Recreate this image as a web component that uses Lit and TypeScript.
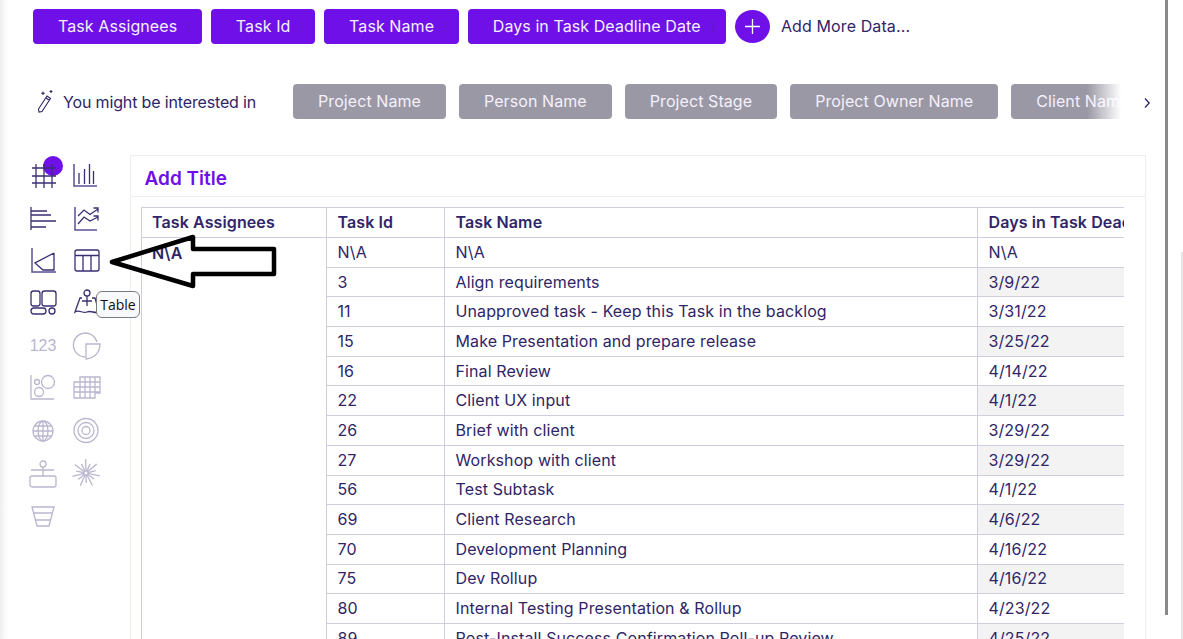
import { LitElement, html, css, svg } from "lit";
import { customElement } from "lit/decorators.js";

const S = (body: unknown, cls = "") => html`<svg class="ic ${cls}" viewBox="0 0 30 30" width="30" height="30">${body}</svg>`;

const burst = Array.from({ length: 14 }, (_, i) => {
  const a = (i / 14) * Math.PI * 2 + 0.2;
  const r = i % 2 ? 10 : 14;
  return svg`<line x1=${15 + 2 * Math.cos(a)} y1=${14 + 2 * Math.sin(a)} x2=${15 + r * Math.cos(a)} y2=${14 + r * Math.sin(a)} />`;
});

const icons = [
  { dim: false, el: S(svg`<circle class="dot" cx="25" cy="6" r="10"/><path d="M8 4V28M16 4V28M24 4V28M4 8H28M4 16H28M4 23H28"/>`) },
  { dim: false, el: S(svg`<path d="M3 4V26H26" class="ax"/><path d="M8 13V24M13.5 9V24M18.5 4V24M22.5 11V24"/>`) },
  { dim: false, el: S(svg`<path d="M3 4V27M3 8H19M3 12H23M3 18H28M3 24H18"/>`) },
  { dim: false, el: S(svg`<path d="M4 4V27H26" class="ax"/><path d="M7 13L13 7L19 11.5L27 6M22.5 5H27V9.5M7 21L13 14L19 18L27 14M22.5 13H27V17.5"/>`) },
  { dim: false, el: S(svg`<path d="M4 3V27H28" class="ax"/><path d="M26 8V25H15L7 18L26 8"/>`) },
  { dim: false, el: S(svg`<rect x="4" y="5" width="24" height="21" rx="2"/><path d="M4 10.5H28M12 10.5V26M20 10.5V26"/>`) },
  { dim: false, el: S(svg`<rect x="3" y="3" width="9" height="15" rx="2.5"/><rect x="14" y="3" width="14" height="15" rx="2.5"/><rect x="3" y="20" width="15" height="6" rx="3"/><circle cx="24" cy="23" r="3"/>`) },
  { dim: false, el: S(svg`<circle cx="16" cy="5" r="3"/><path d="M16 8V18M11 13H21M11 10H9L4 24C8 21 12 26 16 24C20 22 24 26 28 24L24 10H21"/>`) },
  { dim: true, el: html`<span class="num">123</span>` },
  { dim: true, el: S(svg`<path d="M14 26A12 12 0 1 1 26 11"/><path d="M15 13H29C29 21 24 27 15 28Z"/>`) },
  { dim: true, el: S(svg`<path d="M3 2V26H26"/><circle cx="20" cy="9" r="6.5"/><circle cx="11" cy="19" r="4.5"/><circle cx="9" cy="9" r="2.5"/>`) },
  { dim: true, el: S(svg`<path d="M9 4H29V20H24V25H3V9H9ZM9 4V25M14 4V25M19 4V25M24 4V20M3 14H29M9 9H29M3 19H29"/>`) },
  { dim: true, el: S(svg`<circle cx="15" cy="15" r="10"/><ellipse cx="15" cy="15" rx="5" ry="10"/><path d="M15 5V25M5 15H25M6.5 10H23.5M6.5 20H23.5"/>`) },
  { dim: true, el: S(svg`<circle cx="15" cy="14.5" r="12"/><circle cx="15" cy="14.5" r="8"/><circle cx="15" cy="14.5" r="4"/>`) },
  { dim: true, el: S(svg`<circle cx="15" cy="5" r="3"/><path d="M3 11H26M15 8V17"/><rect x="2" y="17" width="26" height="11" rx="2"/>`) },
  { dim: true, el: S(svg`${burst}<circle cx="15" cy="14" r="2.2"/>`) },
  { dim: true, el: S(svg`<path d="M4 5H26L21 24H9ZM6 11H24M7.5 18H22.5"/>`) },
];

const rows: [string, string, string][] = [
  ["N\\A", "N\\A", "N\\A"],
  ["3", "Align requirements", "3/9/22"],
  ["11", "Unapproved task - Keep this Task in the backlog", "3/31/22"],
  ["15", "Make Presentation and prepare release", "3/25/22"],
  ["16", "Final Review", "4/14/22"],
  ["22", "Client UX input", "4/1/22"],
  ["26", "Brief with client", "3/29/22"],
  ["27", "Workshop with client", "3/29/22"],
  ["56", "Test Subtask", "4/1/22"],
  ["69", "Client Research", "4/6/22"],
  ["70", "Development Planning", "4/16/22"],
  ["75", "Dev Rollup", "4/16/22"],
  ["80", "Internal Testing Presentation & Rollup", "4/23/22"],
  ["89", "Post-Install Success Confirmation Roll-up Review", "4/25/22"],
];

@customElement("app-root")
export class AppRoot extends LitElement {
  static styles = css`
    :host { display: block; height: 639px; overflow: hidden; font-family: Inter, "Noto Sans", sans-serif; color: #2f2567; background: #fff; letter-spacing: .11px; }
    .page { display: flex; height: 639px; position: relative; background: linear-gradient(90deg, #eeeeee 0, #fafafa 5px, #fff 9px); }
    .main { width: 1165px; flex: none; display: flex; flex-direction: column; min-width: 0; }
    .thumb { width: 3px; height: 615px; background: #8a8a8a; flex: none; }
    .rest { flex: 1; display: flex; justify-content: flex-end; align-items: flex-end; }
    .rest i { width: 2px; height: 387px; background: #e6e6e6; display: block; }

    .fields { display: flex; align-items: center; gap: 8.7px; padding: 9px 0 0 33px; height: 35px; }
    .chip { height: 35px; box-sizing: border-box; padding: 0 25px 2px; display: flex; align-items: center; border-radius: 4px; color: #f4f0fd; font-size: 16px; letter-spacing: .08px; white-space: nowrap; flex: none; position: relative; }
    .chip.on { background: #6f10e8; }
    .chip.on::after { content: ""; position: absolute; right: 13px; top: 13px; width: 1px; height: 10px; background: repeating-linear-gradient(#4a2a80 0 2px, transparent 2px 4px); opacity: .6; }
    .chip.off { background: #9a98a4; }
    .add { width: 35px; height: 33px; border-radius: 50%; background: #6f10e8; display: flex; align-items: center; justify-content: center; margin-left: 1px; flex: none; }
    .addtxt { margin-left: 2px; font-size: 16px; padding-bottom: 2px; }

    .sugg { display: flex; align-items: center; margin-top: 40px; height: 35px; padding-left: 34px; }
    .wand { flex: none; width: 24px; height: 26px; margin-top: -1px; margin-left: 1px; }
    .wand path { fill: none; stroke: #2f2567; stroke-width: 1.1; }
    .lbl { font-size: 16px; margin-left: 4px; width: 230px; flex: none; white-space: nowrap; letter-spacing: -.15px; }
    .scroller { width: 831px; flex: none; overflow: hidden; display: flex; gap: 13px; position: relative; height: 35px; }
    .scroller::after { content: ""; position: absolute; right: 0; top: 0; bottom: 0; width: 37px; background: linear-gradient(90deg, rgba(255,255,255,0), #fff 92%); }
    .chev { margin-left: 19px; flex: none; margin-top: 3px; }

    .content { display: flex; margin-top: 36px; flex: 1; min-height: 0; }
    .icons { width: 130px; flex: none; box-sizing: border-box; padding: 5px 0 0 28px; display: grid; grid-template-columns: 30px 30px; column-gap: 13px; grid-auto-rows: 42.7px; align-content: start; }
    .cell { width: 30px; height: 30px; display: flex; align-items: center; justify-content: center; }
    .ic { overflow: visible; display: block; }
    .ic path, .ic rect, .ic circle, .ic ellipse, .ic line { fill: none; stroke: #3b2e73; stroke-width: 1.3; }
    .ic .ax { stroke: #5a5090; stroke-width: 1.5; }
    .ic .dot { fill: #6f10e8; stroke: none; }
    .dim .ic path, .dim .ic rect, .dim .ic circle, .dim .ic ellipse, .dim .ic line { stroke: #b9b6cf; }
    .num { font-family: "Liberation Sans", sans-serif; font-size: 16px; color: #b9b6cf; letter-spacing: 0; }

    .card { width: 1016px; flex: none; box-sizing: border-box; border: 1px solid #eeeeee; border-bottom: 0; overflow: hidden; }
    .card h2 { margin: 0; height: 41px; box-sizing: border-box; padding: 5px 0 0 13.5px; display: flex; align-items: center; font-size: 19px; font-weight: 600; letter-spacing: 0; color: #6f10e8; border-bottom: 1px solid #eeeeee; }
    .wrap { margin: 10px 0 0 10px; width: 983px; overflow: hidden; }
    .tbl { display: grid; grid-template-columns: 185px 118px 533px 260px; grid-template-rows: 30px; grid-auto-rows: 29.7px; width: 1097px; border-top: 1px solid #cfcdde; border-left: 1px solid #cfcdde; box-sizing: border-box; font-size: 16px; }
    .c { box-sizing: border-box; border-right: 1px solid #cfcdde; border-bottom: 1px solid #cfcdde; padding: 0 0 1px 10.5px; display: flex; align-items: center; white-space: nowrap; overflow: hidden; }
    .h { font-weight: 600; padding-bottom: 2px; }
    .h.a { padding-left: 10px; }
    .first { grid-row: 2 / span 14; grid-column: 1; align-items: flex-start; font-weight: 600; padding: 5px 0 0 10px; }
    .alt { background: #f3f3f4; }

    .arrow { position: absolute; left: 106px; top: 232px; }
    .tip { position: absolute; left: 96px; top: 291px; width: 44px; height: 27px; box-sizing: border-box; border: 1px solid #7a7a7a; border-radius: 6px; background: #f8f9fb; color: #111; font: 14px "Open Sans", sans-serif; letter-spacing: 0; display: flex; align-items: center; justify-content: center; }
  `;

  render() {
    return html`<div class="page">
      <div class="main">
        <div class="fields">
          ${["Task Assignees", "Task Id", "Task Name", "Days in Task Deadline Date"].map((t) => html`<div class="chip on">${t}</div>`)}
          <div class="add"><svg width="17" height="17" viewBox="0 0 17 17"><path d="M8.5 1V16M1 8.5H16" stroke="#fff" stroke-width="1.3" fill="none" /></svg></div>
          <div class="addtxt">Add More Data...</div>
        </div>
        <div class="sugg">
          <svg class="wand" viewBox="0 0 24 26"><path d="M4 24L3.5 21L12 8L15.5 10.5L7 23.5ZM11 10L14.5 12.5M8 3.5V7M6.2 5.2H9.8M16 2V5M14.5 3.5H17.5"/></svg>
          <div class="lbl">You might be interested in</div>
          <div class="scroller">
            ${["Project Name", "Person Name", "Project Stage", "Project Owner Name", "Client Name"].map((t) => html`<div class="chip off">${t}</div>`)}
          </div>
          <svg class="chev" width="8" height="12" viewBox="0 0 8 12"><path d="M2 1.5L6.2 6L2 10.5" fill="none" stroke="#2f2567" stroke-width="1.3" /></svg>
        </div>
        <div class="content">
          <div class="icons">
            ${icons.map((i) => html`<div class="cell ${i.dim ? "dim" : ""}">${i.el}</div>`)}
          </div>
          <div class="card">
            <h2>Add Title</h2>
            <div class="wrap">
              <div class="tbl">
                <div class="c h a">Task Assignees</div>
                <div class="c h">Task Id</div>
                <div class="c h">Task Name</div>
                <div class="c h">Days in Task Deadline Date</div>
                <div class="c first">N\\A</div>
                ${rows.map((r, i) => html`
                  <div class="c" style="grid-column:2">${r[0]}</div>
                  <div class="c">${r[1]}</div>
                  <div class="c ${i % 2 ? "alt" : ""}">${r[2]}</div>`)}
              </div>
            </div>
          </div>
        </div>
      </div>
      <div class="thumb"></div>
      <div class="rest"><i></i></div>
      <svg class="arrow" width="174" height="60" viewBox="106 232 174 60"><path d="M112 262L193 237V249H274V274H193V286Z" fill="none" stroke="#000" stroke-width="4.5" stroke-linejoin="round" /></svg>
      <div class="tip">Table</div>
    </div>`;
  }
}
